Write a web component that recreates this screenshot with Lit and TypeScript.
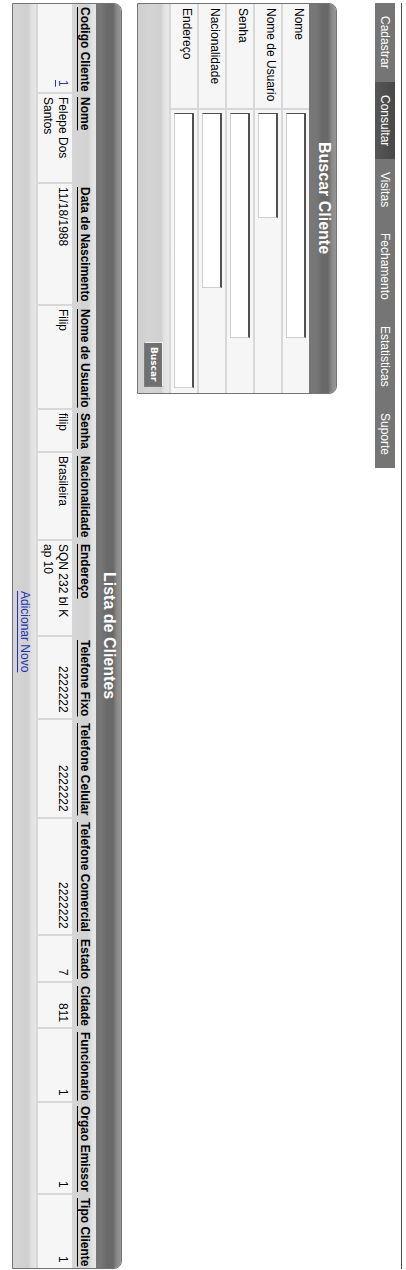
import { LitElement, html, css } from "lit";
import { customElement, property } from "lit/decorators.js";
import { classMap } from "lit/directives/class-map.js";
import { styleMap } from "lit/directives/style-map.js";

const panelStyles = css`
  :host {
    display: block;
    box-sizing: border-box;
    overflow: hidden;
    border: 1px solid #747474;
    border-start-start-radius: 8px;
    border-start-end-radius: 8px;
    background: #d8d8d8;
  }
  .title {
    margin: 0;
    padding-block-end: 2px;
    font-size: 16px;
    font-weight: bold;
    line-height: 23px;
    text-align: center;
    color: #fff;
    background: linear-gradient(to left, #969696 0, #8a8a8a 4px, #686868 8px, #6a6a6a 14px, #777 20px);
  }
`;

interface Field {
  id: string;
  label: string;
  size: string;
}

const FIELDS: Field[] = [
  { id: "nome", label: "Nome", size: "long" },
  { id: "usuario", label: "Nome de Usuario", size: "short" },
  { id: "senha", label: "Senha", size: "long" },
  { id: "nacionalidade", label: "Nacionalidade", size: "medium" },
  { id: "endereco", label: "Endereço", size: "full" },
];

@customElement("main-menu")
class MainMenu extends LitElement {
  @property() current = "";

  static styles = css`
    :host {
      display: block;
    }
    .menu {
      display: flex;
      inline-size: fit-content;
      background: #757575;
    }
    .item {
      padding-inline: 13px;
      line-height: 20px;
      color: #fff;
      text-decoration: none;
    }
    .active {
      background: linear-gradient(to left, #484848, #565656);
    }
  `;

  render() {
    const items = ["Cadastrar", "Consultar", "Visitas", "Fechamento", "Estatisticas", "Suporte"];
    return html`<nav class="menu">
      ${items.map(
        (name) => html`<a href="#" class=${classMap({ item: true, active: name === this.current })}>${name}</a>`
      )}
    </nav>`;
  }
}

@customElement("client-search")
class ClientSearch extends LitElement {
  static styles = [
    panelStyles,
    css`
      :host {
        inline-size: 391px;
        max-inline-size: 100%;
      }
      .title {
        padding-block-end: 4px;
      }
      .row {
        display: flex;
        background: #f6f6f6;
        border-block-end: 2px solid #d8d8d8;
      }
      .label {
        flex: none;
        box-sizing: border-box;
        inline-size: 106px;
        padding: 3px;
        padding-inline-start: 4px;
        line-height: 15px;
        border-inline-end: 2px solid #d8d8d8;
      }
      .cell {
        flex: 1;
        display: flex;
        padding: 3px;
      }
      .box {
        box-sizing: border-box;
        block-size: 20px;
        min-inline-size: 0;
        margin: 0;
        padding: 1px;
        font: inherit;
        background: #fff;
        border: 1px solid #cfcfcf;
        border-block-start: 2px solid #505050;
        border-inline-start: 1px solid #505050;
        border-radius: 0;
      }
      .short {
        inline-size: 105px;
      }
      .medium {
        inline-size: 175px;
      }
      .long {
        inline-size: 225px;
      }
      .full {
        inline-size: 275px;
      }
      .footer {
        display: flex;
        justify-content: flex-end;
        padding: 6px;
        background: linear-gradient(to left, #e8e8e8 0, #e2e2e2 5px, #d0d0d0 8px, #d4d4d4 20px, #cfcfcf);
      }
      .button {
        box-sizing: border-box;
        block-size: 19px;
        inline-size: 45px;
        margin: 0;
        padding: 0;
        font: bold 9px "DejaVu Sans", sans-serif;
        color: #fff;
        background: #707070;
        border: 1px solid #7c7c7c;
        border-block-start-color: #f0f0f0;
        border-inline-start-color: #f0f0f0;
      }
    `,
  ];

  render() {
    return html`
      <h2 class="title">Buscar Cliente</h2>
      <form @submit=${(e: Event) => e.preventDefault()}>
        ${FIELDS.map(
          (f) => html`<div class="row">
            <label class="label" for=${f.id}>${f.label}</label>
            <div class="cell"><input class="box ${f.size}" id=${f.id} type="text" /></div>
          </div>`
        )}
        <div class="footer"><button class="button" type="submit">Buscar</button></div>
      </form>
    `;
  }
}

interface Column {
  label: string;
  share: number;
  value: string;
  kind?: "number" | "link";
}

const COLUMNS: Column[] = [
  { label: "Codigo Cliente", share: 90, value: "1", kind: "link" },
  { label: "Nome", share: 90, value: "Felepe Dos Santos" },
  { label: "Data de Nascimento", share: 122, value: "11/18/1988" },
  { label: "Nome de Usuario", share: 104, value: "Filip" },
  { label: "Senha", share: 43, value: "filip" },
  { label: "Nacionalidade", share: 88, value: "Brasileira" },
  { label: "Endereço", share: 96, value: "SQN 232 bl K ap 10" },
  { label: "Telefone Fixo", share: 83, value: "2222222", kind: "number" },
  { label: "Telefone Celular", share: 99, value: "2222222", kind: "number" },
  { label: "Telefone Comercial", share: 117, value: "2222222", kind: "number" },
  { label: "Estado", share: 47, value: "7", kind: "number" },
  { label: "Cidade", share: 46, value: "811", kind: "number" },
  { label: "Funcionario", share: 74, value: "1", kind: "number" },
  { label: "Orgao Emissor", share: 92, value: "1", kind: "number" },
  { label: "Tipo Cliente", share: 73, value: "1", kind: "number" },
];

const TOTAL = COLUMNS.reduce((sum, c) => sum + c.share, 0);

@customElement("client-list")
class ClientList extends LitElement {
  static styles = [
    panelStyles,
    css`
      .table {
        inline-size: 100%;
        table-layout: fixed;
        border-collapse: separate;
        border-spacing: 0;
      }
      .head {
        padding: 0;
        padding-block-end: 2px;
        padding-inline-start: 3px;
        line-height: 22px;
        text-align: start;
        white-space: nowrap;
        background: linear-gradient(to left, #e6e6e6 0, #e2e2e2 4px, #d2d2d2 8px, #d6d6d6);
      }
      .sort {
        color: #000;
        text-underline-position: left;
      }
      .data {
        padding-block: 2px;
        padding-inline: 3px 5px;
        line-height: 15px;
        vertical-align: top;
        background: #f6f6f6;
        border-block-end: 2px solid #d8d8d8;
        border-inline-end: 2px solid #d8d8d8;
      }
      .data:last-child {
        border-inline-end: none;
      }
      .end {
        text-align: end;
      }
      .link {
        color: #2233bb;
      }
      .footer {
        padding-inline-end: 8px;
        line-height: 23px;
        text-align: center;
        background: linear-gradient(to left, #e6e6e6 0, #e2e2e2 4px, #d0d0d0 8px, #d4d4d4);
      }
    `,
  ];

  render() {
    return html`
      <h2 class="title">Lista de Clientes</h2>
      <table class="table">
        <colgroup>
          ${COLUMNS.map((c) => html`<col style=${styleMap({ inlineSize: `${(c.share / TOTAL) * 100}%` })} />`)}
        </colgroup>
        <thead>
          <tr>
            ${COLUMNS.map((c) => html`<th class="head" scope="col"><a class="sort" href="#">${c.label}</a></th>`)}
          </tr>
        </thead>
        <tbody>
          <tr>
            ${COLUMNS.map(
              (c) => html`<td class=${classMap({ data: true, end: !!c.kind })}>
                ${c.kind === "link" ? html`<a class="link" href="#">${c.value}</a>` : c.value}
              </td>`
            )}
          </tr>
        </tbody>
      </table>
      <div class="footer"><a class="link" href="#">Adicionar Novo</a></div>
    `;
  }
}

@customElement("app-root")
class AppRoot extends LitElement {
  static styles = css`
    :host {
      display: block;
      box-sizing: border-box;
      writing-mode: vertical-rl;
      inline-size: 100vh;
      min-block-size: 100vw;
      padding-block: 4px 12px;
      padding-inline: 3px 1px;
      font-family: "Liberation Sans", Arial, sans-serif;
      font-size: 12px;
      color: #000;
      background: #fff;
    }
    .top {
      padding-block-start: 6px;
      border-block-start: 1px solid #4c4c4c;
    }
    .search {
      margin-block: 38px 15px;
    }
  `;

  render() {
    return html`
      <header class="top"><main-menu current="Consultar"></main-menu></header>
      <client-search class="search"></client-search>
      <client-list></client-list>
    `;
  }
}
